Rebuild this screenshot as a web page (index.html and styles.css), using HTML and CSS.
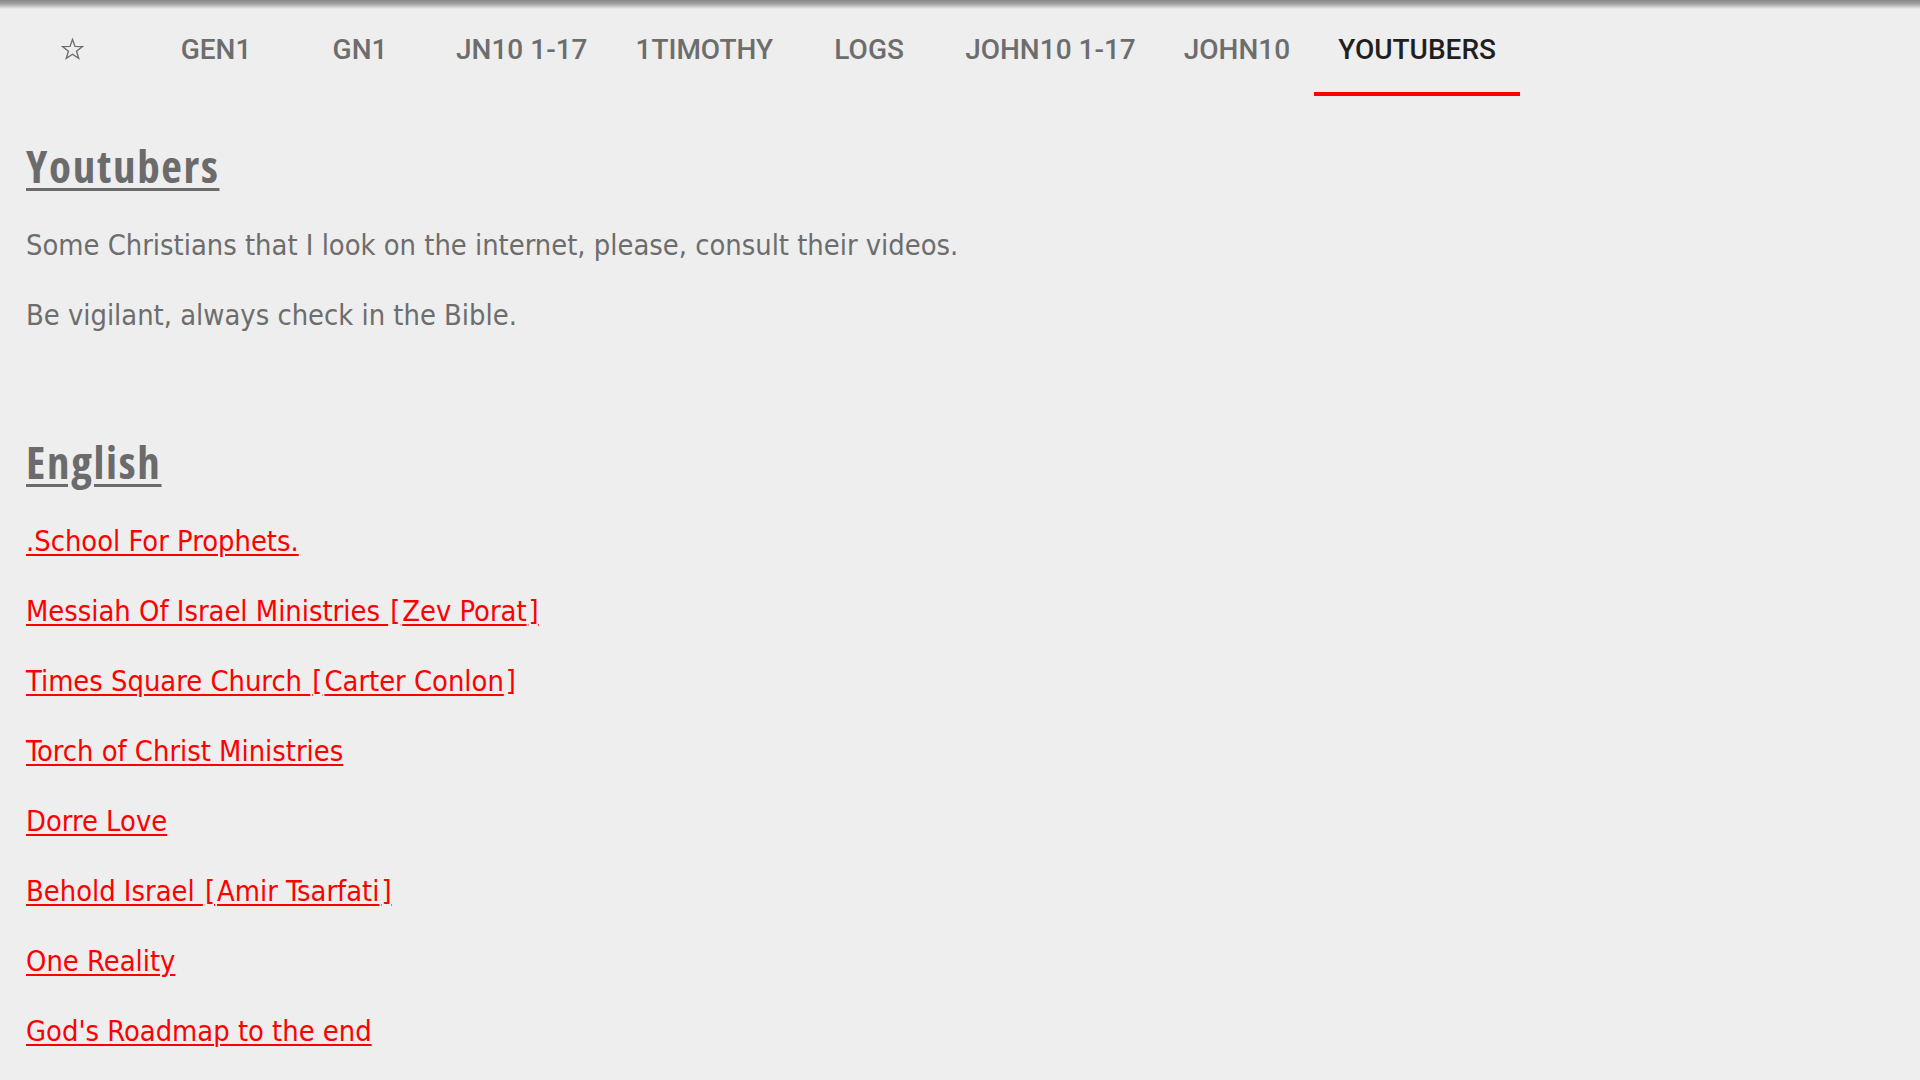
FILE: index.html
```html
<!DOCTYPE html>
<html lang="en">
<head>
    <meta charset="UTF-8">
    <meta name="viewport" content="width=device-width, initial-scale=1.0">
    <title>Youtubers</title>
    <link rel="stylesheet" href="styles.css">
</head>
<body>
    <nav class="tabs">
        <a class="tab tab-star" href="#">
            <svg class="star" viewBox="0 0 24 24" width="23" height="23">
                <polygon points="12,1.5 14.6,8.8 22.4,9 16.2,13.8 18.5,21.3 12,16.9 5.5,21.3 7.8,13.8 1.6,9 9.4,8.8" fill="none" stroke="#6d6d6d" stroke-width="1.4" stroke-linejoin="miter"/>
            </svg>
        </a>
        <a class="tab" href="#">Gen1</a>
        <a class="tab" href="#">Gn1</a>
        <a class="tab" href="#">Jn10 1-17</a>
        <a class="tab" href="#">1Timothy</a>
        <a class="tab" href="#">Logs</a>
        <a class="tab" href="#">John10 1-17</a>
        <a class="tab" href="#">John10</a>
        <a class="tab active" href="#">Youtubers</a>
    </nav>

    <main class="content">
        <h1 class="title">Youtubers</h1>
        <p class="text">Some Christians that I look on the internet, please, consult their videos.</p>
        <p class="text">Be vigilant, always check in the Bible.</p>

        <h1 class="title title-lang">English</h1>
        <ul class="links">
            <li><a href="#">.School For Prophets.</a></li>
            <li><a href="#">Messiah Of Israel Ministries <span class="br">[</span>Zev Porat<span class="br">]</span></a></li>
            <li><a href="#">Times Square Church <span class="br">[</span>Carter Conlon<span class="br">]</span></a></li>
            <li><a href="#">Torch of Christ Ministries</a></li>
            <li><a href="#">Dorre Love</a></li>
            <li><a href="#">Behold Israel <span class="br">[</span>Amir Tsarfati<span class="br">]</span></a></li>
            <li><a href="#">One Reality</a></li>
            <li><a href="#">God's Roadmap to the end</a></li>
        </ul>
    </main>
</body>
</html>
```

FILE: styles.css
```css
body {
  margin: 0;
  background-color: #eeeeee;
  color: #6d6d6d;
  font-family: "DejaVu Sans Condensed", "DejaVu Sans", sans-serif;
  font-stretch: condensed;
}

/* tab bar */
.tabs {
  display: flex;
  height: 96px;
  background: linear-gradient(to bottom, #888888 0, #a2a2a2 4px, #eeeeee 9px);
}
.tab {
  box-sizing: border-box;
  min-width: 144px;
  padding: 6px 24px 0;
  display: flex;
  align-items: center;
  justify-content: center;
  border-bottom: 4px solid transparent;
  font-family: Roboto, "Liberation Sans", sans-serif;
  font-stretch: normal;
  font-size: 28px;
  font-weight: 500;
  text-transform: uppercase;
  text-decoration: none;
  color: #6d6d6d;
  white-space: nowrap;
}
.tab.active {
  color: #1f1f1f;
  border-bottom-color: #ff0000;
}
.star {
  display: block;
}

/* page */
.content {
  padding: 40px 26px 0;
}
.title {
  display: inline-block;
  margin: 0 0 14px;
  font-family: "Open Sans", sans-serif;
  font-stretch: 75%;
  font-weight: 700;
  font-size: 45px;
  line-height: 60px;
  letter-spacing: 1.7px;
  color: #6b6b6b;
  text-decoration: underline;
  text-decoration-thickness: 3px;
  text-underline-offset: 5px;
}
.title-lang {
  margin-top: 82px;
}
.text {
  margin: 0;
  font-size: 28.8px;
  line-height: 70px;
}
.links {
  list-style: none;
  margin: 0;
  padding: 0;
}
.links li {
  font-size: 28.8px;
  line-height: 70px;
}
.links a {
  color: #ff0000;
  text-decoration: underline;
  text-decoration-thickness: 2px;
  text-underline-offset: 3px;
}
.br {
  margin: 0 2px;
}
```
